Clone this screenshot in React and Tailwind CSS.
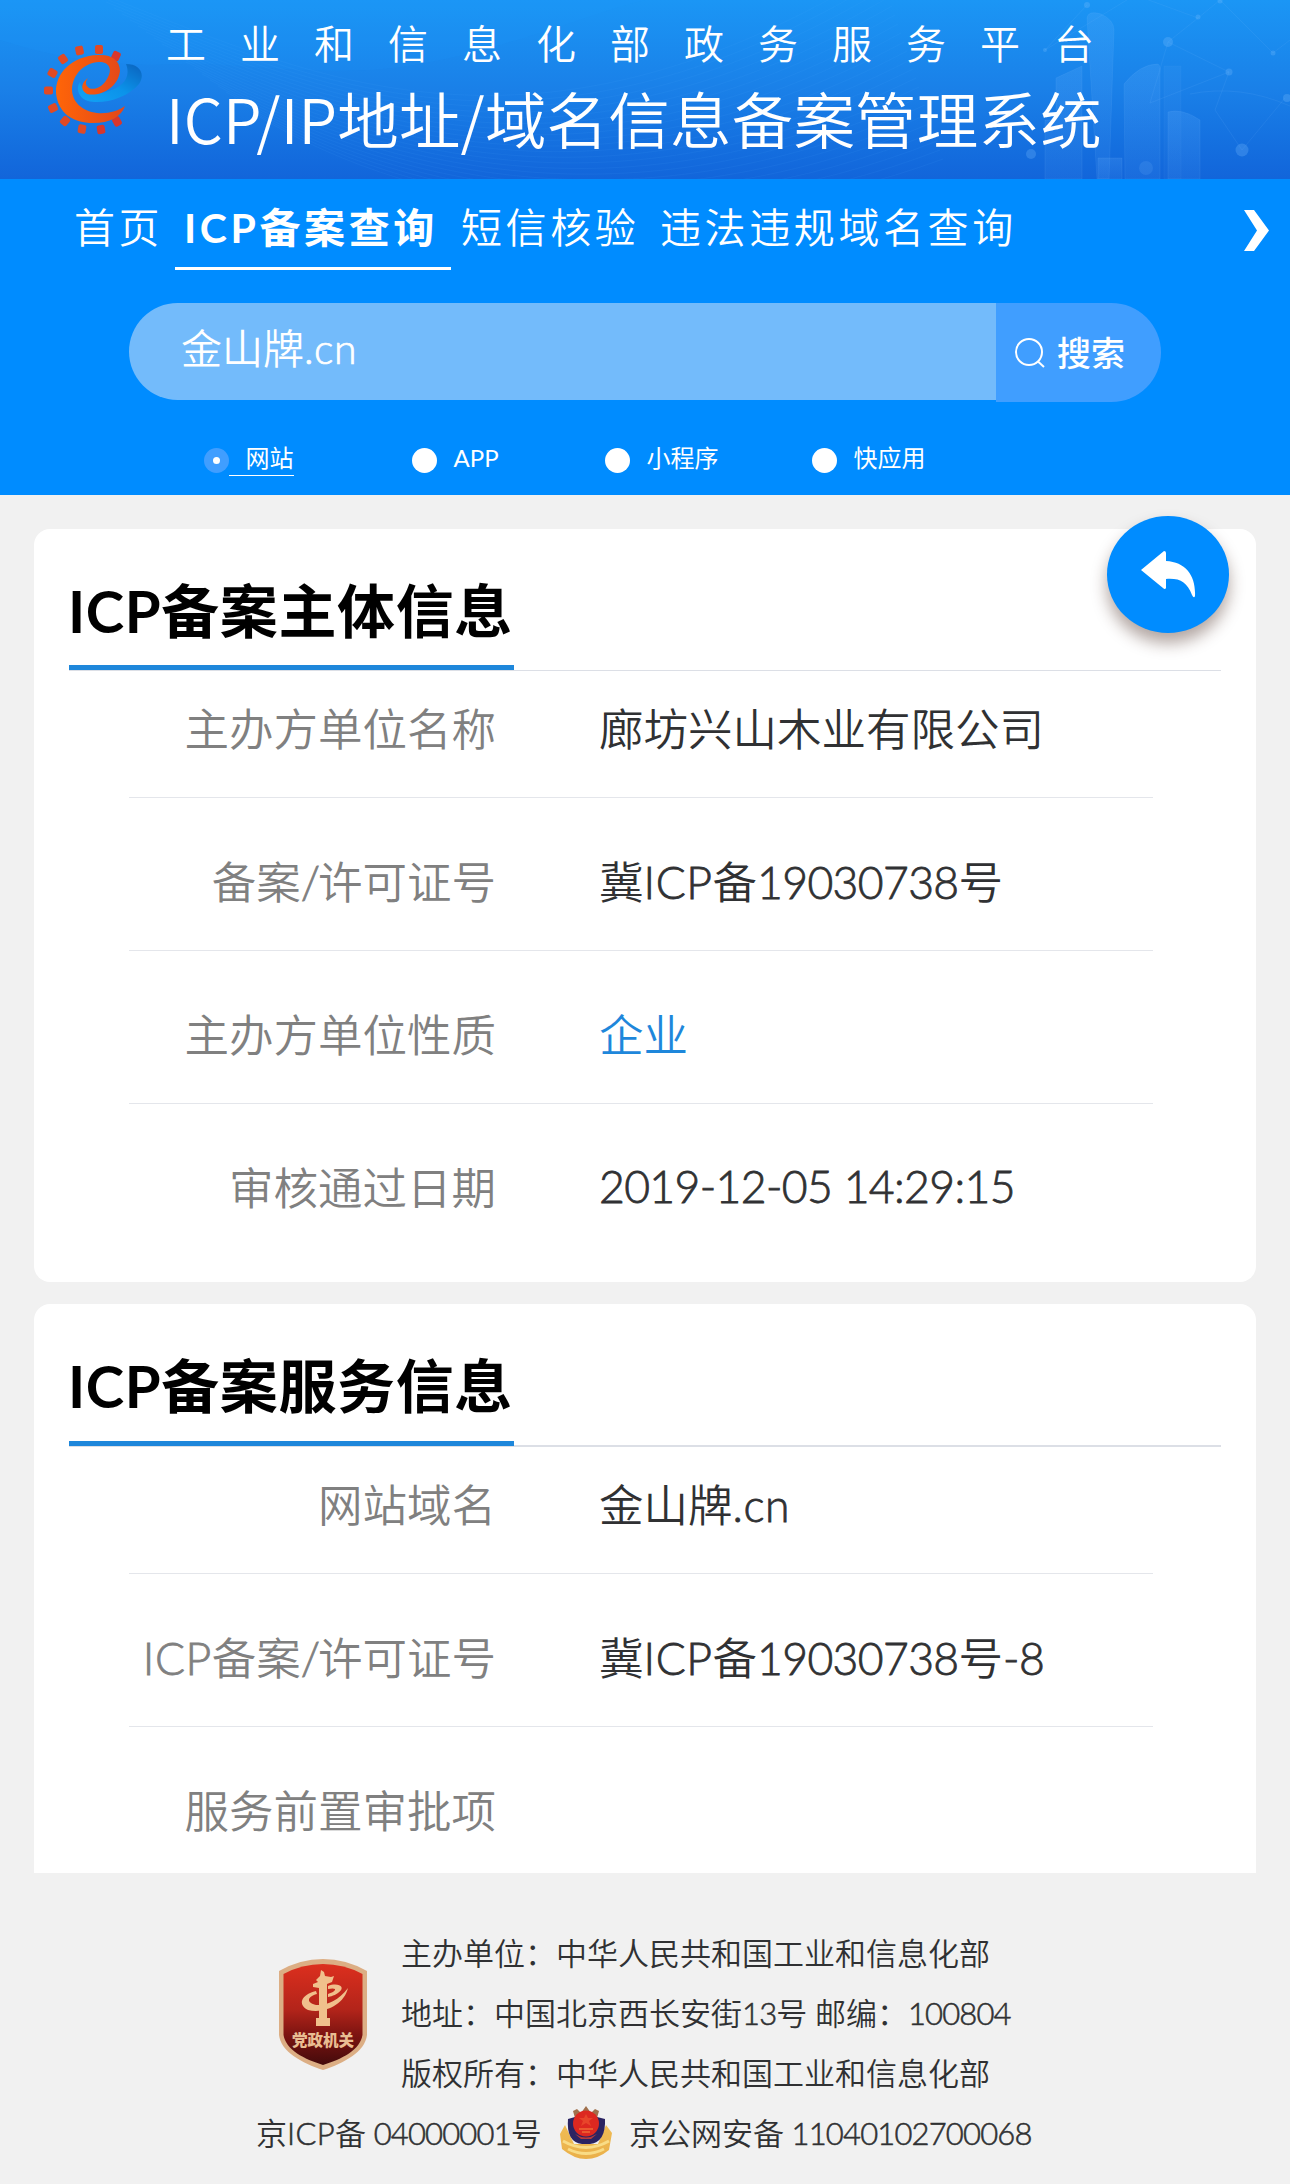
import React from "react";

const CARDS = [
  {
    title: "ICP备案主体信息",
    rows: [
      ["主办方单位名称", "廊坊兴山木业有限公司"],
      ["备案/许可证号", "冀ICP备19030738号"],
      ["主办方单位性质", "企业", true],
      ["审核通过日期", "2019-12-05 14:29:15"],
    ],
  },
  {
    title: "ICP备案服务信息",
    rows: [
      ["网站域名", "金山牌.cn"],
      ["ICP备案/许可证号", "冀ICP备19030738号-8"],
      ["服务前置审批项", ""],
    ],
  },
];

function latinTracking(part, small) {
  if (part === "/") return "tracking-[-0.05em]";
  if (/[a-zA-Z]/.test(part)) return "tracking-[0.012em]";
  return small ? "tracking-[-0.027em]" : "tracking-[-0.014em]";
}

// Sets Latin letters and digits slightly heavier than Lato Light so they balance the Chinese text.
function Mixed({ children, small }) {
  return children.split(/([ -~]+)/).map((part, i) =>
    i % 2 ? (
      <span key={i} className={`font-light [-webkit-text-stroke:0.018em_currentColor] ${latinTracking(part, small)}`}>{part}</span>
    ) : (
      part
    )
  );
}

function HeaderArt() {
  const waves = Array.from({ length: 22 }, (_, i) => i);
  return (
    <svg className="absolute inset-0" width="1290" height="179" viewBox="0 0 1290 179" fill="none">
      <defs>
        <linearGradient id="bar" x1="0" y1="0" x2="0" y2="1">
          <stop offset="0" stopColor="#6fb6ff" stopOpacity="0.18" />
          <stop offset="1" stopColor="#6fb6ff" stopOpacity="0.08" />
        </linearGradient>
      </defs>
      <path d="M0 40C70 62 120 66 180 64S330 80 420 64 600 10 645 0H0Z" fill="#22a0fb" opacity="0.12" />
      <g stroke="#5db4ff" strokeOpacity="0.08">
        {waves.map((i) => (
          <path key={i} d={`M${90 + i * 8} ${-10 + i * 6}C${300 + i * 6} ${70 + i * 7} ${520 + i * 8} ${190 + i * 3} ${880 + i * 3} ${-30 + i * 9}`} />
        ))}
      </g>
      <g fill="url(#bar)" stroke="#8cc8ff" strokeOpacity="0.1">
        <path d="M1087 18Q1088 10 1101 14Q1114 20 1114 30L1109 179H1097Z" />
        <path d="M1056 78L1082 66V179H1045V120H1056Z" />
        <path d="M1124 84Q1140 64 1158 64Q1161 66 1160 74V179H1125Z" />
        <path d="M1164 66H1181V179H1164Z" opacity="0.5" />
        <path d="M1168 112Q1182 108 1200 120V179H1168Z" />
        <path d="M1098 158H1122V179H1098Z" />
      </g>
      <g stroke="#8cc8ff" strokeOpacity="0.1">
        <path d="M1087 5L1045 50L1135 -5L1198 18L1168 42L1229 72M1220 0L1273 53L1290 40M1198 18L1220 0M1168 42L1150 103M1229 72L1150 103M1285 98L1242 150L1215 110L1229 72" />
        <path d="M1190 94Q1240 84 1290 106" />
      </g>
      <g fill="#7fc0ff" fillOpacity="0.26">
        <circle cx="1087" cy="5" r="3" />
        <circle cx="1198" cy="17" r="2.5" />
        <circle cx="1168" cy="42" r="5" />
        <circle cx="1229" cy="72" r="3.5" />
        <circle cx="1273" cy="53" r="2.5" />
        <circle cx="1220" cy="1" r="2.5" />
        <circle cx="1045" cy="50" r="2" />
        <circle cx="1031" cy="154" r="5" />
        <circle cx="1242" cy="150" r="6.5" />
        <circle cx="1146" cy="168" r="7" fillOpacity="0.14" />
        <circle cx="1287" cy="98" r="4" />
      </g>
    </svg>
  );
}

function GearLogo() {
  const teeth = [
    [96, 36, 25], [79, 29.5, 0], [59.5, 30.5, -12], [43, 39, -35], [32.5, 53, -60], [28.5, 70.5, -90],
    [33, 88, -115], [45, 101, -140], [62, 109, -170], [81, 109.5, 170], [97, 101.5, 150],
  ];
  return (
    <svg className="shrink-0" width="100" height="100" viewBox="24 20 100 100">
      <defs>
        <linearGradient id="swoosh" x1="0" y1="1" x2="1" y2="0">
          <stop offset="0" stopColor="#12a2f5" />
          <stop offset="0.5" stopColor="#0b93ea" />
          <stop offset="1" stopColor="#0b62bd" />
        </linearGradient>
        <linearGradient id="gear" x1="0" y1="0" x2="1" y2="0">
          <stop offset="0" stopColor="#ff6508" />
          <stop offset="1" stopColor="#e2471a" />
        </linearGradient>
      </defs>
      <path d="M106 44C119 44 126 53 119 64C108 78 82 85 68 81C57 77 56 67 60 62C62 73 75 75 86 72C104 67 111 57 106 44Z" fill="url(#swoosh)" />
      {teeth.map(([x, y, a]) => (
        <rect key={a} x={x - 4} y={y - 4.5} width="8" height="9" rx="2" fill={a > 0 ? "#d8362c" : "#e04a25"} transform={`rotate(${a} ${x} ${y})`} />
      ))}
      <path d="M68 58C61 63 60 70 67 74C80 77 98 68 100 51C100 40 91 34 78 35C52 36 35 53 36 73C38 94 54 103 73 103C90 103 101 97 105 86C98 91 88 94 77 93C62 91 52 82 52 69C53 54 64 43 79 42C90 42 92 50 88 57C84 66 75 71 69 68C65 65 65 62 68 58Z" fill="url(#gear)" />
    </svg>
  );
}

function Shield() {
  return (
    <svg className="shrink-0" width="90" height="112" viewBox="0 0 90 112">
      <defs>
        <linearGradient id="red" x1="0" y1="0" x2="0" y2="1">
          <stop offset="0" stopColor="#dc2f1e" />
          <stop offset="0.45" stopColor="#b3241a" />
          <stop offset="0.7" stopColor="#7d1411" />
          <stop offset="1" stopColor="#430a0b" />
        </linearGradient>
      </defs>
      <path d="M1 12Q22 0 45 0T89 12V76C87 93 66 104 45 111C24 104 3 93 1 76Z" fill="#dcae84" />
      <path d="M5.500 15Q24 5 45 5T84.500 15V76C82 91 64 100 45 106C26 100 8 91 5.500 76Z" fill="url(#red)" />
      <g fill="#f0c08c">
        <path d="M43 11L46 13L47 17L53 18L56 17L54 23L49 25V59H52V67H38V59H41V29L35 28V25L40 23L38 21L42 17Z" />
        <path d="M38 32C22 36 20 46 30 51C46 55 66 46 70 29C60 42 48 47 38 46C29 44 28 38 39 35ZM50 27C60 23 69 28 60 34C56 37 50 38 50 38V35C59 32 60 28 50 30Z" />
      </g>
      <text x="45" y="87" textAnchor="middle" fontSize="15.500" fontWeight="900" fill="#e9bd92" fontFamily="'Noto Sans CJK SC', sans-serif">党政机关</text>
    </svg>
  );
}

function PoliceBadge() {
  return (
    <svg className="shrink-0" width="52" height="54" viewBox="0 0 52 54">
      <defs>
        <linearGradient id="gold" x1="0" y1="0" x2="0" y2="1">
          <stop offset="0" stopColor="#f0bc55" />
          <stop offset="1" stopColor="#eab04a" />
        </linearGradient>
      </defs>
      <path d="M5 19L0 28L2 43Q14 53 26 53T49 44L52 27L46 19L38 38H14Z" fill="url(#gold)" />
      <path d="M3 35Q26 48 49 35M8 43Q26 52 44 43" stroke="#f9dc86" strokeWidth="3" fill="none" />
      <path d="M13 5L17 3L21 7L26 0L31 7L35 3L39 5L37 12H15Z" fill="#a0704c" />
      <path d="M8 13L15 11H37L45 13Q46 36 30 38H22Q6 36 8 13Z" fill="#2b2462" />
      <circle cx="26" cy="17.500" r="13" fill="#dd2820" />
      <path d="M15 28Q26 35 37 28L31 33H21Z" fill="#b83a3a" />
      <path d="M26 8L28 12L33 12L29 15L31 20L26 17L21 20L23 15L19 12H24Z" fill="#e8452a" />
      <path d="M19 23H33M22 26H30" stroke="#f06a35" strokeWidth="1.500" />
    </svg>
  );
}

function Radio({ label, selected, className }) {
  return (
    <div className={`flex items-center ${className}`}>
      <span className={`flex size-[24.5px] items-center justify-center rounded-full ${selected ? "bg-[#409eff]" : "bg-white"}`}>
        {selected && <span className="size-[7px] rounded-full bg-white" />}
      </span>
      <span className={`flex h-[31px] items-start border-b pl-[17px] text-[24px] leading-[26px] ${selected ? "border-white" : "border-transparent"}`}>
        {label}
      </span>
    </div>
  );
}

function Card({ title, rows, last }) {
  return (
    <section className={`bg-white px-[35px] ${last ? "h-[569px] rounded-t-[16px]" : "h-[753px] rounded-[16px]"}`}>
      <div className={`flex border-[#dcdfe6] ${last ? "h-[143px] border-b-2" : "h-[142px] border-b"}`}>
        <h2 className={`flex w-[445px] items-center border-b-[5px] border-[#1e87db] pt-[27px] text-[58px] leading-none font-bold tracking-[0.6px] whitespace-nowrap text-black ${last ? "h-[142px]" : "h-[141px]"}`}>
          <span className="-ml-px">{title}</span>
        </h2>
      </div>
      <dl className="mx-[60px] w-[1024px]">
        {rows.map(([k, v, link], i) => (
          <div key={k} className={`flex items-center border-[#e4e6eb] text-[44.5px] leading-none font-[350] whitespace-nowrap ${i === 0 ? "h-[127px] pb-[10px]" : "h-[153px] pt-[16px]"} ${i < rows.length - 1 ? "border-b" : ""}`}>
            <dt className="w-[367px] text-right text-[#808080]"><span className="float-right"><Mixed>{k}</Mixed></span></dt>
            <dd className={`ml-[103px] ${link ? "text-[#1e87db]" : "text-[#303133]"} ${/^\d/.test(v) ? "pb-1" : ""}`}><Mixed>{v}</Mixed></dd>
          </div>
        ))}
      </dl>
    </section>
  );
}

export default function App() {
  return (
    <div className="relative h-[2184px] w-[1290px] overflow-hidden bg-[#f1f1f1] font-['Lato','Noto_Sans_CJK_SC',sans-serif]" lang="zh-CN">
      <header className="relative h-[179px] bg-linear-to-b from-[#1b96f5] via-[#1a80e8] to-[#1265da]">
        <HeaderArt />
        <div className="relative flex h-full pl-[44px] font-['Noto_Sans_CJK_SC',sans-serif] font-[350] text-white">
          <div className="pt-[40px]"><GearLogo /></div>
          <div className="ml-[22px] whitespace-nowrap">
            <p className="mt-[20px] text-[40px] leading-[44px] tracking-[34px]">工业和信息化部政务服务平台</p>
            <h1 className="mt-[21px] text-[61.5px] leading-[66px] tracking-[0.2px]">ICP/IP地址/域名信息备案管理系统</h1>
          </div>
        </div>
      </header>

      <div className="h-[316px] bg-[#008cff] text-white">
        <nav className="flex h-[91px] items-stretch pl-[74px] text-[41px] leading-[44px] font-[350] tracking-[3.6px] whitespace-nowrap">
          <a className="w-[101px] pt-[27px]">首页</a>
          <a className="w-[276px] border-b-[3px] border-white pt-[27px] pl-[9px] font-bold">ICP备案查询</a>
          <a className="w-[199px] pt-[27px] pl-[10px]">短信核验</a>
          <a className="pt-[27px] pl-[10px]">违法违规域名查询</a>
          <svg className="mt-[31px] mr-[21px] ml-auto" width="25" height="41" viewBox="0 0 25 41">
            <path d="M0 0H10L25 20.500L10 41H0L13 20.500Z" fill="#fff" />
          </svg>
        </nav>
        <div className="mt-[33px] flex items-start pl-[129px]">
          <div className="flex h-[97px] w-[867px] items-center rounded-l-full bg-[#73bbfb] pb-[7px] pl-[52px] text-[41px] leading-none font-[350]">
            <span><Mixed>金山牌.cn</Mixed></span>
          </div>
          <button className="flex h-[99px] w-[165px] items-center rounded-r-full bg-[#409eff] pl-[19px] text-[34px] leading-none font-medium whitespace-nowrap">
            <svg className="mr-[12px] shrink-0" width="30" height="30" viewBox="0 0 30 30" fill="none" stroke="#fff" strokeWidth="2">
              <circle cx="14" cy="14" r="13" />
              <path d="M23 23.500L29 29" />
            </svg>
            搜索
          </button>
        </div>
        <div className="mt-[43px] flex pl-[204px]">
          <Radio label="网站" selected className="w-[208px]" />
          <Radio label="APP" className="w-[193px]" />
          <Radio label="小程序" className="w-[207px]" />
          <Radio label="快应用" />
        </div>
      </div>

      <main className="mx-[34px] mt-[34px] flex flex-col gap-[22px]">
        <Card {...CARDS[0]} />
        <Card {...CARDS[1]} last />
      </main>

      <button className="absolute top-[516px] left-[1107px] flex h-[117px] w-[122px] items-center justify-center rounded-[50%] bg-[#008cff] shadow-[0_10px_16px_rgba(60,30,20,0.4)]">
        <svg width="55" height="47" viewBox="0 0 55 47">
          <path d="M0 19L23 0Q25 0 25 2V10C45 11 55 25 54 45Q53 48 51 44C46 31 39 27 25 28V37Q24 39 22 37Z" fill="#fff" />
        </svg>
      </button>

      <footer className="mt-[50px] text-[31px] leading-[60px] font-[350] whitespace-nowrap text-[#303133]">
        <div className="flex pl-[278px]">
          <div className="pt-[36px]"><Shield /></div>
          <div className="ml-[33px]">
            <p>主办单位：中华人民共和国工业和信息化部</p>
            <p><Mixed small>地址：中国北京西长安街13号 邮编：100804</Mixed></p>
            <p>版权所有：中华人民共和国工业和信息化部</p>
          </div>
        </div>
        <div className="flex items-center pl-[256px]">
          <span className="w-[304px]"><Mixed small>京ICP备 04000001号</Mixed></span>
          <PoliceBadge />
          <span className="ml-[17px]"><Mixed small>京公网安备 11040102700068</Mixed></span>
        </div>
      </footer>
    </div>
  );
}
